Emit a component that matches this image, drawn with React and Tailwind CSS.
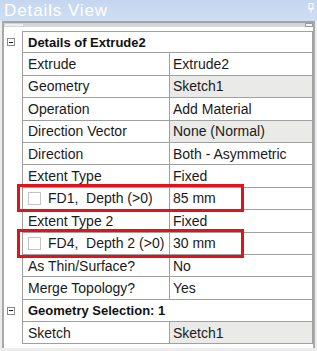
const rows = [
  { type: 'head', label: 'Details of Extrude2' },
  { label: 'Extrude', value: 'Extrude2' },
  { label: 'Geometry', value: 'Sketch1', shaded: true },
  { label: 'Operation', value: 'Add Material' },
  { label: 'Direction Vector', value: 'None (Normal)', shaded: true },
  { label: 'Direction', value: 'Both - Asymmetric' },
  { label: 'Extent Type', value: 'Fixed' },
  { label: 'FD1,  Depth (>0)', value: '85 mm', check: true },
  { label: 'Extent Type 2', value: 'Fixed' },
  { label: 'FD4,  Depth 2 (>0)', value: '30 mm', check: true },
  { label: 'As Thin/Surface?', value: 'No' },
  { label: 'Merge Topology?', value: 'Yes' },
  { type: 'head', label: 'Geometry Selection: 1' },
  { label: 'Sketch', value: 'Sketch1', shaded: true },
];

const MinusBox = () => (
  <div className="w-[8px] h-[8px] border border-[#8a8a8a] bg-white flex items-center justify-center">
    <div className="w-[4px] h-px bg-[#222]" />
  </div>
);

const Row = ({ row, first }) => {
  if (row.type === 'head') {
    return (
      <div className="flex h-[22.4px]">
        <div className="w-[18px] flex items-center pl-[3px]">
          <MinusBox />
        </div>
        <div
          className={`flex-1 flex items-center pl-[5px] border-l border-r border-b border-[#a0a0a0] font-bold text-[13px] text-[#111] ${first ? 'border-t' : ''}`}
        >
          {row.label}
        </div>
      </div>
    );
  }
  return (
    <div className="flex h-[22.4px]">
      <div className="w-[18px]" />
      <div className="flex-1 flex border-l border-r border-b border-[#a0a0a0]">
        <div className="w-[147px] flex items-center pl-[5px] border-r border-[#a0a0a0] whitespace-pre">
          {row.check && (
            <span className="w-[13px] h-[13px] border border-[#c4c4c4] bg-white mr-[7px] shrink-0" />
          )}
          {row.label}
        </div>
        <div className={`flex-1 flex items-center pl-[3px] ${row.shaded ? 'bg-[#eaeae8]' : 'bg-white'}`}>
          {row.value}
        </div>
      </div>
    </div>
  );
};

export default function App() {
  return (
    <div
      className="relative w-[317px] h-[351px] bg-[#ececec] overflow-hidden text-[14px] text-[#1a1a1a] leading-none"
      style={{ fontFamily: '"Liberation Sans", Arial, sans-serif' }}
    >
      {/* title bar */}
      <div className="h-[21px] bg-gradient-to-b from-[#c4d6ef] to-[#cfdef2] flex items-center justify-between pl-[4px] pr-[3px]">
        <span className="text-white text-[17px] tracking-[0.9px]">Details View</span>
        <svg width="6" height="10" viewBox="0 0 6 10" className="mb-[6px]">
          <rect x="1" y="0.5" width="4" height="5" fill="none" stroke="#fff" />
          <line x1="0" y1="6" x2="6" y2="6" stroke="#fff" />
          <line x1="3" y1="6" x2="3" y2="10" stroke="#fff" />
        </svg>
      </div>

      {/* panel */}
      <div className="mx-[2px] h-[327px] border-x-2 border-[#a9a9a9] bg-white flex flex-col">
        <div className="h-[6px] border-t-2 border-[#a4a4a4] bg-[#d6d6d6] flex justify-between">
          <div className="w-[18px] h-[2px] mt-px ml-[1px] bg-[#eeeeee]" />
          <div className="w-[8px] h-[4px] bg-[#f4f4f4] border border-[#9a9a9a]" />
        </div>
        <div className="pt-[4px]">
          {rows.map((row, i) => (
            <Row key={i} row={row} first={i === 0} />
          ))}
        </div>
      </div>

      {/* annotation boxes */}
      <div className="absolute left-[17px] top-[184px] w-[227px] h-[28px] border-[3px] border-[#e0131b]" />
      <div className="absolute left-[17px] top-[229px] w-[227px] h-[29px] border-[3px] border-[#e0131b]" />
    </div>
  );
}
